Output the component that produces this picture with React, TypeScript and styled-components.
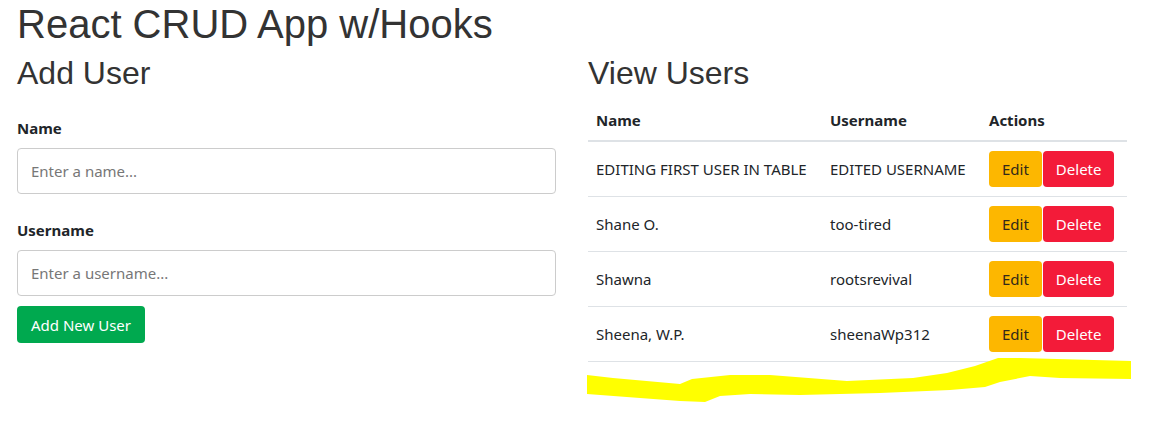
import React, {useState} from "react";
import styled, {createGlobalStyle} from "styled-components";

const GlobalStyle = createGlobalStyle`
  html, body {
    margin: 0;
    padding: 0;
    background: #ffffff;
  }
  body {
    font-family: "Noto Sans", "Open Sans", sans-serif;
    font-size: 15px;
    color: #212529;
  }
  * {
    box-sizing: border-box;
  }
`

const Page = styled.div`
  padding: 0 17px;
`

const Title = styled.h1`
  margin: 0 0 6px;
  font: 40px/48px "Liberation Sans", Arial, sans-serif;
  color: #333;
`

const Row = styled.div`
  display: flex;
  gap: 32px;
`

const Column = styled.div`
  width: 539px;
  flex: 0 0 539px;
`

const Heading = styled.h2`
  margin: 0 0 8px;
  font: 32px/38px "Liberation Sans", Arial, sans-serif;
  color: #333;
`

const Form = styled.form`
  display: flex;
  flex-direction: column;
  padding-top: 17px;
`

const Field = styled.div<{ $spaced?: boolean }>`
  display: flex;
  flex-direction: column;
  margin-top: ${p => (p.$spaced ? "25px" : "0")};
`

const Label = styled.label`
  font-weight: 700;
  line-height: 22px;
  margin-bottom: 9px;
`

const Input = styled.input`
  height: 46px;
  width: 100%;
  padding: 0 13px;
  border: 1px solid #cccccc;
  border-radius: 4px;
  font: inherit;
  color: #212529;
  outline: none;

  &::placeholder {
    color: #777777;
  }
`

const AddButton = styled.button`
  align-self: flex-start;
  margin-top: 10px;
  height: 37px;
  padding: 0 14px;
  border: none;
  border-radius: 4px;
  background: #00a94f;
  color: #ffffff;
  font: inherit;
`

const Table = styled.table`
  width: 539px;
  border-collapse: collapse;
  table-layout: fixed;
`

const HeadCell = styled.th<{ $w: number }>`
  width: ${p => p.$w}px;
  text-align: left;
  padding: 8px;
  line-height: 24px;
  font-weight: 700;
  border-bottom: 2px solid #dee2e6;
`

const Cell = styled.td`
  padding: 9px 8px;
  line-height: 24px;
  vertical-align: middle;
  border-bottom: 1px solid #dee2e6;
  white-space: nowrap;
`

const Actions = styled.div`
  display: flex;
  gap: 1px;
`

const ActionButton = styled.button<{ $kind: "edit" | "delete" }>`
  height: 36px;
  padding: 0 13px;
  border: none;
  border-radius: 4px;
  font: inherit;
  background: ${p => (p.$kind === "edit" ? "#fdb700" : "#f31b39")};
  color: ${p => (p.$kind === "edit" ? "#33291a" : "#ffffff")};
`

const Highlight = styled.svg`
  display: block;
  margin: -4px 0 0 -2px;
  overflow: visible;
`

type User = { id: number; name: string; username: string };

const initialUsers: User[] = [
    {id: 1, name: "EDITING FIRST USER IN TABLE", username: "EDITED USERNAME"},
    {id: 2, name: "Shane O.", username: "too-tired"},
    {id: 3, name: "Shawna", username: "rootsrevival"},
    {id: 4, name: "Sheena, W.P.", username: "sheenaWp312"},
]

const App = () => {
    const [users] = useState<User[]>(initialUsers)
    return (
        <Page>
            <GlobalStyle/>
            <Title>React CRUD App w/Hooks</Title>
            <Row>
                <Column>
                    <Heading>Add User</Heading>
                    <Form onSubmit={e => e.preventDefault()}>
                        <Field>
                            <Label>Name</Label>
                            <Input type="text" placeholder="Enter a name..."/>
                        </Field>
                        <Field $spaced>
                            <Label>Username</Label>
                            <Input type="text" placeholder="Enter a username..."/>
                        </Field>
                        <AddButton>Add New User</AddButton>
                    </Form>
                </Column>
                <Column>
                    <Heading>View Users</Heading>
                    <Table>
                        <thead>
                        <tr>
                            <HeadCell $w={234}>Name</HeadCell>
                            <HeadCell $w={159}>Username</HeadCell>
                            <HeadCell $w={146}>Actions</HeadCell>
                        </tr>
                        </thead>
                        <tbody>
                        {users.map(u => (
                            <tr key={u.id}>
                                <Cell>{u.name}</Cell>
                                <Cell>{u.username}</Cell>
                                <Cell>
                                    <Actions>
                                        <ActionButton $kind="edit">Edit</ActionButton>
                                        <ActionButton $kind="delete">Delete</ActionButton>
                                    </Actions>
                                </Cell>
                            </tr>
                        ))}
                        </tbody>
                    </Table>
                    {/* marker scribble under the table */}
                    <Highlight width="546" height="44" viewBox="0 0 546 44">
                        <path
                            fill="#ffff00"
                            d="M1 17 L27 20 L94 26 L106 21 L144 17 L184 17 L261 23 L327 20 L361 15 L389 8 L412 0 L434 0 L545 3
                               L545 21 L474 20 L444 18 L414 24 L399 29 L364 32 L294 35 L214 37 L164 36 L134 38 L119 44
                               L94 43 L54 40 L1 36 Z"
                        />
                    </Highlight>
                </Column>
            </Row>
        </Page>
    )
}

export default App;
